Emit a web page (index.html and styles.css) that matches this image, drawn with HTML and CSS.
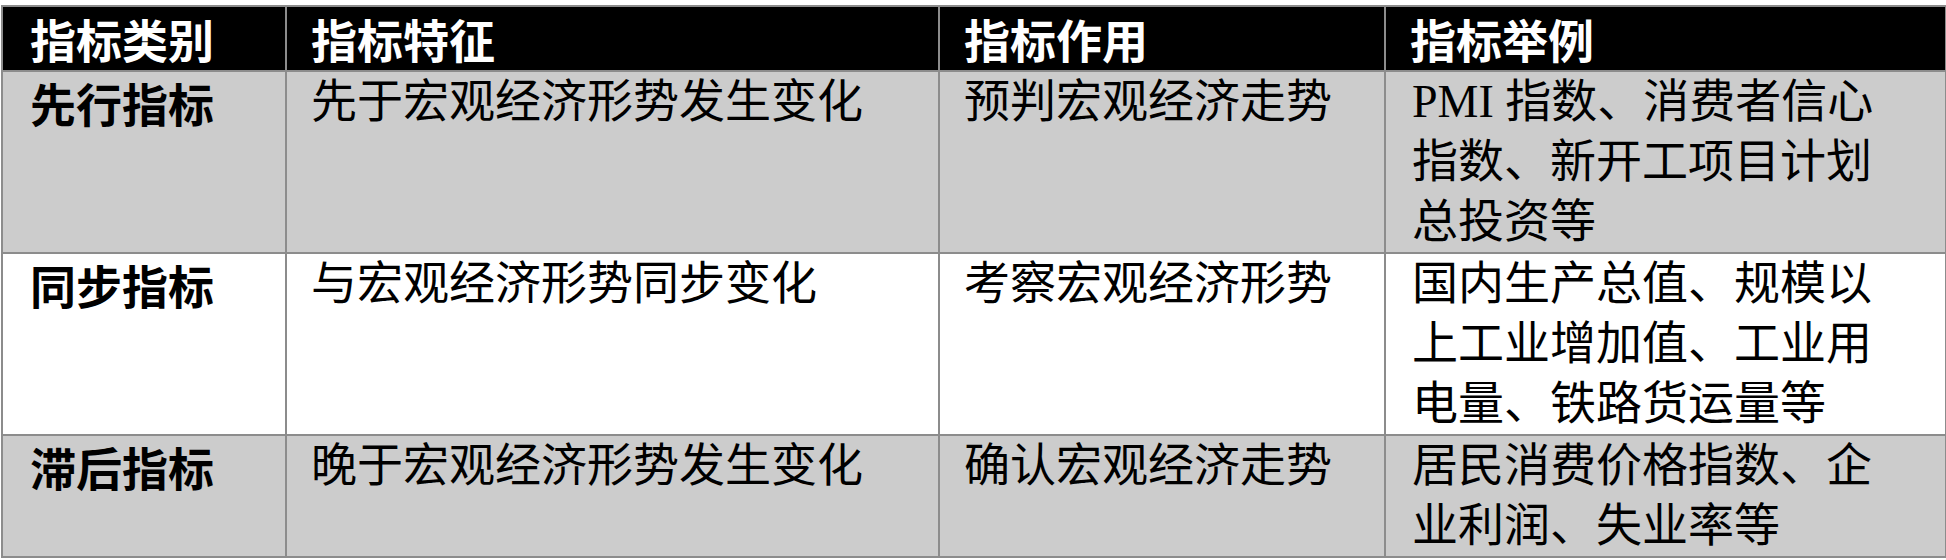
FILE: index.html
```html
<!DOCTYPE html>
<html lang="zh-CN">
<head>
<meta charset="utf-8">
<title>指标类别</title>
<link rel="stylesheet" href="styles.css">
</head>
<body>
<table class="ind-table">
  <colgroup>
    <col class="c1"><col class="c2"><col class="c3"><col class="c4">
  </colgroup>
  <thead>
    <tr class="head">
      <th>指标类别</th>
      <th>指标特征</th>
      <th>指标作用</th>
      <th>指标举例</th>
    </tr>
  </thead>
  <tbody>
    <tr class="shade">
      <td class="label">先行指标</td>
      <td>先于宏观经济形势发生变化</td>
      <td>预判宏观经济走势</td>
      <td class="ex">PMI 指数、消费者信心指数、新开工项目计划总投资等</td>
    </tr>
    <tr class="plain">
      <td class="label">同步指标</td>
      <td>与宏观经济形势同步变化</td>
      <td>考察宏观经济形势</td>
      <td class="ex">国内生产总值、规模以上工业增加值、工业用电量、铁路货运量等</td>
    </tr>
    <tr class="shade">
      <td class="label">滞后指标</td>
      <td>晚于宏观经济形势发生变化</td>
      <td>确认宏观经济走势</td>
      <td class="ex">居民消费价格指数、企业利润、失业率等</td>
    </tr>
  </tbody>
</table>
</body>
</html>
```

FILE: styles.css
```css
html, body {
  margin: 0;
  padding: 0;
  background: #ffffff;
}

body {
  padding: 5px 0 0 1px;
}

.ind-table {
  border-collapse: collapse;
  table-layout: fixed;
  width: 1944px;
  font-family: "Liberation Serif", "Noto Sans CJK SC", serif;
  font-size: 46px;
  line-height: 60px;
  color: #000000;
}

.c1 { width: 284px; }
.c2 { width: 653px; }
.c3 { width: 446px; }
.c4 { width: 561px; }

.ind-table th,
.ind-table td {
  border: 2px solid #8c8c8c;
  padding: 0 30px 0 24px;
  text-align: left;
  vertical-align: top;
  font-weight: normal;
}

.ind-table th:first-child,
.ind-table td:first-child {
  padding-left: 27px;
}

.ind-table td.ex {
  padding-left: 26px;
  padding-right: 52px;
}

.head th {
  background: #000000;
  color: #ffffff;
  font-family: "Noto Sans CJK SC", sans-serif;
  font-weight: 700;
  vertical-align: middle;
  padding-top: 1px;
  padding-bottom: 2px;
}

.head th:nth-child(2),
.head th:nth-child(3),
.head th:nth-child(4) {
  border-left-color: #3a3a3a;
}

.shade td {
  background: #cccccc;
}

.plain td {
  background: #ffffff;
}

.ind-table td.label {
  font-family: "Noto Sans CJK SC", sans-serif;
  font-weight: 700;
}
```
